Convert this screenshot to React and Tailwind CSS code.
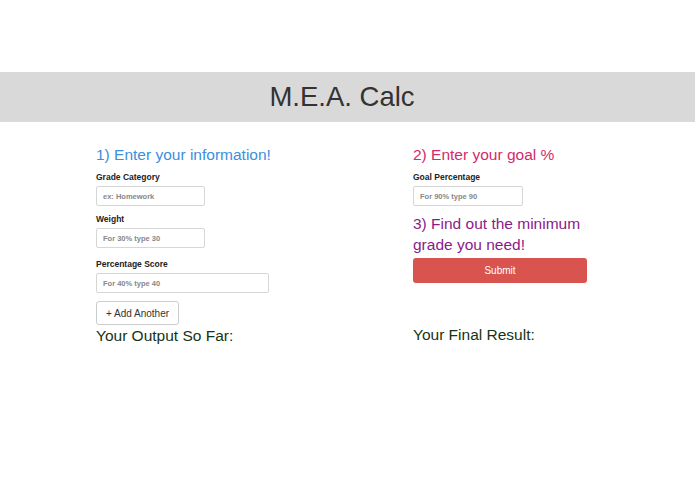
import React from 'react';

const font = { fontFamily: '"Liberation Sans", Arial, sans-serif' };

function Field({ label, placeholder, width, className = '' }) {
  return (
    <div className={className}>
      <div className="text-[8.5px] leading-[12px] font-bold text-[#222]">{label}</div>
      <input
        placeholder={placeholder}
        className={`block mt-[3px] h-[20px] ${width} rounded-[2px] border border-[#d6d6d6] px-[6px] text-[7.5px] font-bold text-[#555] placeholder:text-[#888] outline-none`}
      />
    </div>
  );
}

export default function App() {
  return (
    <div className="w-[695px] h-[494px] bg-white" style={font}>
      <div className="h-[72px]" />
      <div className="h-[50px] bg-[#d9d9d9] flex items-center justify-center">
        <h1 className="text-[27.5px] leading-none text-[#333] pr-[11px]">M.E.A. Calc</h1>
      </div>

      <div className="flex pl-[96px] pt-[23px]">
        {/* Left column */}
        <div className="w-[317px] flex flex-col items-start">
          <h2 className="text-[15.5px] leading-[20px] text-[#3b8fdc]">1) Enter your information!</h2>
          <Field className="mt-[6px]" label="Grade Category" placeholder="ex: Homework" width="w-[109px]" />
          <Field className="mt-[7px]" label="Weight" placeholder="For 30% type 30" width="w-[109px]" />
          <Field className="mt-[10px]" label="Percentage Score" placeholder="For 40% type 40" width="w-[173px]" />
          <button className="mt-[8px] h-[24px] w-[83px] rounded-[3px] border border-[#cccccc] bg-white text-[10px] text-[#333]">
            + Add Another
          </button>
          <h3 className="mt-[1px] text-[15.5px] leading-[20px] text-[#163316]">Your Output So Far:</h3>
        </div>

        {/* Right column */}
        <div className="w-[174px] flex flex-col items-start">
          <h2 className="text-[15.5px] leading-[20px] text-[#d42a6b]">2) Enter your goal %</h2>
          <Field className="mt-[6px]" label="Goal Percentage" placeholder="For 90% type 90" width="w-[110px]" />
          <h3 className="mt-[7px] text-[15.5px] leading-[21px] text-[#8a1b8a]">3) Find out the minimum grade you need!</h3>
          <button className="mt-[3px] h-[25px] w-[174px] rounded-[3px] bg-[#d9534f] text-[10px] text-white">
            Submit
          </button>
          <h3 className="mt-[42px] text-[15.5px] leading-[20px] text-[#163316]">Your Final Result:</h3>
        </div>
      </div>
    </div>
  );
}
